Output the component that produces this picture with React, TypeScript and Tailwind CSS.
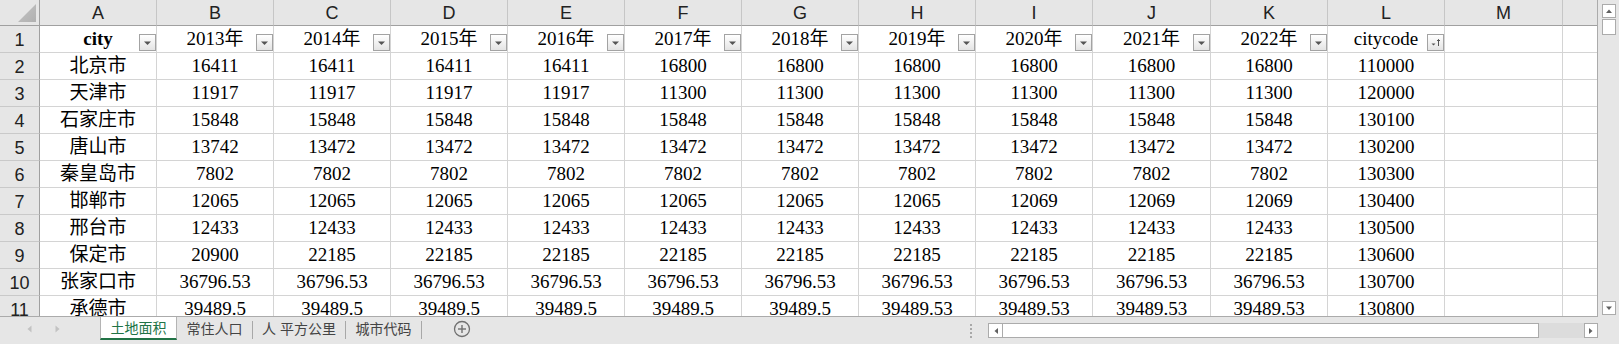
import React from "react";

const WCLS = [
  "w-[117px]", "w-[117px]", "w-[117px]", "w-[117px]", "w-[117px]", "w-[117px]",
  "w-[117px]", "w-[117px]", "w-[117px]", "w-[118px]", "w-[117px]", "w-[117px]", "w-[118px]",
];
const LETTERS = ["A", "B", "C", "D", "E", "F", "G", "H", "I", "J", "K", "L", "M"];
const HEAD = [
  "city", "2013年", "2014年", "2015年", "2016年", "2017年", "2018年", "2019年",
  "2020年", "2021年", "2022年", "citycode", "",
];

const rep = (v: string, n: number): string[] => Array(n).fill(v);

const DATA: [string, string[], string][] = [
  ["北京市", [...rep("16411", 4), ...rep("16800", 6)], "110000"],
  ["天津市", [...rep("11917", 4), ...rep("11300", 6)], "120000"],
  ["石家庄市", rep("15848", 10), "130100"],
  ["唐山市", ["13742", ...rep("13472", 9)], "130200"],
  ["秦皇岛市", rep("7802", 10), "130300"],
  ["邯郸市", [...rep("12065", 7), ...rep("12069", 3)], "130400"],
  ["邢台市", rep("12433", 10), "130500"],
  ["保定市", ["20900", ...rep("22185", 9)], "130600"],
  ["张家口市", rep("36796.53", 10), "130700"],
  ["承德市", [...rep("39489.5", 6), ...rep("39489.53", 4)], "130800"],
];

const SERIF = "font-['Liberation_Serif','Noto_Sans_CJK_SC',serif]";
const SANS = "font-['Liberation_Sans','Noto_Sans_CJK_SC',sans-serif]";

function FilterBtn({ sort }: { sort?: boolean }) {
  return (
    <div className="absolute right-0 bottom-[1px] w-[17px] h-[17px] border border-[#a3a3a3] bg-gradient-to-b from-white to-[#e4e4e4] flex items-center justify-center">
      {sort ? (
        <svg width="15" height="15" viewBox="0 0 15 15">
          <polygon points="3.5,8.5 7.5,8.5 5.5,10.5" fill="#555" />
          <line x1="10.5" y1="4.5" x2="10.5" y2="11" stroke="#555" strokeWidth="1" />
          <polyline points="9,6 10.5,4.5 12,6" fill="none" stroke="#555" strokeWidth="1" />
        </svg>
      ) : (
        <svg width="15" height="15" viewBox="0 0 15 15">
          <polygon points="4,6.5 11,6.5 7.5,10" fill="#555" />
        </svg>
      )}
    </div>
  );
}

function RowHead({ n }: { n: number }) {
  return (
    <div className={`w-[40px] shrink-0 border-r border-b border-r-[#a0a0a0] border-b-[#c9c9c9] bg-[#e6e6e6] flex items-center justify-center pt-[2px] text-[18px] text-[#222] ${SANS}`}>
      {n}
    </div>
  );
}

function Cell({ i, children, bold, filter, sort }: { i: number; children?: React.ReactNode; bold?: boolean; filter?: boolean; sort?: boolean }) {
  return (
    <div className={`${WCLS[i]} shrink-0 relative border-r border-b border-[#d4d4d4] bg-white flex items-center justify-center pt-[1px] text-[19px] text-black whitespace-nowrap ${SERIF} ${bold ? "font-bold" : ""}`}>
      {children}
      {filter ? <FilterBtn sort={sort} /> : null}
    </div>
  );
}

function TabSep() {
  return <div className="w-px h-[18px] mt-[4px] bg-[#a8a8a8] shrink-0" />;
}

export default function App() {
  return (
    <div className="w-[1619px] h-[344px] overflow-hidden bg-[#e6e6e6] flex flex-col">
      <div className="flex h-[317px] shrink-0">
        {/* grid */}
        <div className="w-[1598px] h-[317px] shrink-0 border-r border-b border-[#ababab] overflow-hidden bg-white flex flex-col">
          {/* column header */}
          <div className="flex h-[26px] shrink-0">
            <div className="w-[40px] shrink-0 border-r border-b border-[#a0a0a0] bg-[#e6e6e6] relative">
              <svg className="absolute left-[17px] top-[3px]" width="20" height="20" viewBox="0 0 20 20">
                <defs>
                  <linearGradient id="tri" x1="0" y1="0" x2="1" y2="1">
                    <stop offset="0" stopColor="#c4c4c4" />
                    <stop offset="1" stopColor="#b0b0b0" />
                  </linearGradient>
                </defs>
                <polygon points="1,19 19,1 19,19" fill="url(#tri)" />
              </svg>
            </div>
            {LETTERS.map((l, i) => (
              <div key={l} className={`${WCLS[i]} shrink-0 border-r border-b border-r-[#c6c6c6] border-b-[#a0a0a0] bg-[#e6e6e6] flex items-center justify-center pt-[2px] text-[18px] text-[#222] ${SANS}`}>
                {l}
              </div>
            ))}
            <div className="flex-1 border-b border-[#a0a0a0] bg-[#e6e6e6]" />
          </div>
          {/* row 1 */}
          <div className="flex h-[27px] shrink-0">
            <RowHead n={1} />
            {HEAD.map((h, i) => (
              <Cell key={i} i={i} bold={i === 0} filter={i < 12} sort={i === 11}>
                {h}
              </Cell>
            ))}
            <div className="flex-1 border-b border-[#d4d4d4]" />
          </div>
          {DATA.map(([city, vals, code], r) => (
            <div key={r} className="flex h-[27px] shrink-0">
              <RowHead n={r + 2} />
              <Cell i={0}>{city}</Cell>
              {vals.map((v, j) => (
                <Cell key={j} i={j + 1}>{v}</Cell>
              ))}
              <Cell i={11}>{code}</Cell>
              <Cell i={12} />
              <div className="flex-1 border-b border-[#d4d4d4]" />
            </div>
          ))}
        </div>
        {/* vertical scrollbar */}
        <div className="flex-1 flex flex-col items-center pt-[4px] pb-[2px] bg-[#e6e6e6]">
          <div className="w-[14px] h-[14px] border border-[#ababab] bg-white flex items-center justify-center">
            <svg width="8" height="6" viewBox="0 0 8 6"><polygon points="1,5 7,5 4,1.5" fill="#606060" /></svg>
          </div>
          <div className="w-[14px] h-[16px] mt-[1px] border border-[#ababab] bg-white" />
          <div className="flex-1" />
          <div className="w-[14px] h-[14px] border border-[#ababab] bg-white flex items-center justify-center">
            <svg width="8" height="6" viewBox="0 0 8 6"><polygon points="1,1.5 7,1.5 4,5" fill="#606060" /></svg>
          </div>
        </div>
      </div>

      {/* sheet tab bar */}
      <div className="flex h-[27px] shrink-0 items-start">
        <div className="w-[100px] shrink-0 h-[24px] flex items-center">
          <svg className="ml-[27px]" width="5" height="8" viewBox="0 0 5 8"><polygon points="4.5,0.5 4.5,7.5 0.5,4" fill="#c2c2c2" /></svg>
          <svg className="ml-[23px]" width="5" height="8" viewBox="0 0 5 8"><polygon points="0.5,0.5 0.5,7.5 4.5,4" fill="#c2c2c2" /></svg>
        </div>
        <div className={`w-[77px] h-[23px] shrink-0 bg-white border-l border-r border-[#b4b4b4] border-b-2 border-b-[#217346] flex items-center justify-center pt-[1px] text-[14px] text-[#217346] ${SANS}`}>
          土地面积
        </div>
        <div className={`w-[75px] h-[23px] shrink-0 flex items-center justify-center pt-[1px] text-[14px] text-[#444] ${SANS}`}>常住人口</div>
        <TabSep />
        <div className={`w-[92px] h-[23px] shrink-0 flex items-center justify-center pt-[1px] text-[14px] text-[#444] ${SANS}`}>人 平方公里</div>
        <TabSep />
        <div className={`w-[75px] h-[23px] shrink-0 flex items-center justify-center pt-[1px] text-[14px] text-[#444] ${SANS}`}>城市代码</div>
        <TabSep />
        <div className="w-[543px] shrink-0 h-[24px] flex items-center">
          <svg className="ml-[31px]" width="18" height="18" viewBox="0 0 18 18">
            <circle cx="9" cy="9" r="7.5" fill="none" stroke="#707070" strokeWidth="1.3" />
            <line x1="5" y1="9" x2="13" y2="9" stroke="#707070" strokeWidth="1.4" />
            <line x1="9" y1="5" x2="9" y2="13" stroke="#707070" strokeWidth="1.4" />
          </svg>
        </div>
        <div className="w-[23px] shrink-0 flex flex-col items-start pl-[5px] pt-[7px] gap-[2px]">
          <div className="w-[2px] h-[2px] bg-[#a8a8a8]" />
          <div className="w-[2px] h-[2px] bg-[#a8a8a8]" />
          <div className="w-[2px] h-[2px] bg-[#a8a8a8]" />
          <div className="w-[2px] h-[2px] bg-[#a8a8a8]" />
        </div>
        {/* horizontal scrollbar */}
        <div className="w-[610px] shrink-0 h-[15px] mt-[6px] flex">
          <div className="w-[15px] h-[15px] shrink-0 border border-[#ababab] bg-white flex items-center justify-center">
            <svg width="6" height="8" viewBox="0 0 6 8"><polygon points="5,1 5,7 1.5,4" fill="#606060" /></svg>
          </div>
          <div className="w-[536px] h-[15px] shrink-0 border border-l-0 border-[#ababab] bg-white" />
          <div className="flex-1 h-[15px] bg-[#dcdcdc]" />
          <div className="w-[14px] h-[15px] shrink-0 border border-[#ababab] bg-white flex items-center justify-center">
            <svg width="6" height="8" viewBox="0 0 6 8"><polygon points="1,1 1,7 4.5,4" fill="#606060" /></svg>
          </div>
        </div>
        <div className="flex-1" />
      </div>
    </div>
  );
}
